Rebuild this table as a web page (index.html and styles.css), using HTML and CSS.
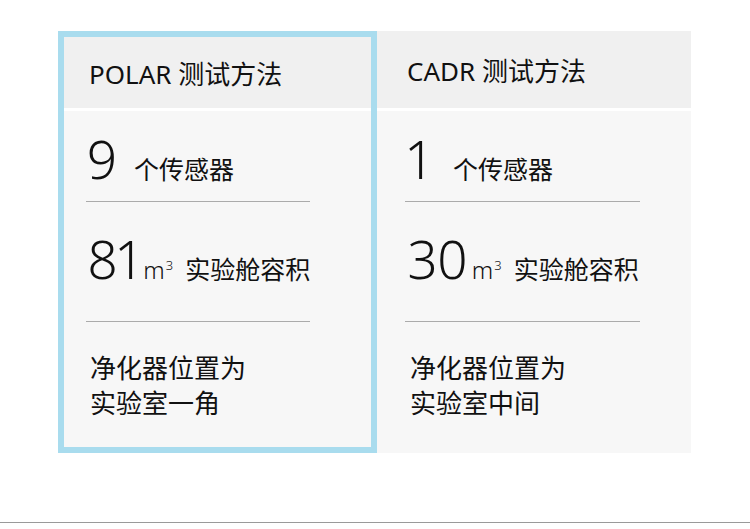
FILE: index.html
```html
<!DOCTYPE html>
<html lang="zh-CN">
<head>
<meta charset="utf-8">
<title>测试方法对比</title>
<link rel="stylesheet" href="styles.css">
</head>
<body>
<div class="compare">
  <section class="card card--active">
    <header class="card-head"><h2 class="title">POLAR 测试方法</h2></header>
    <div class="card-body">
      <div class="stat stat--count"><span class="num num--box">9</span><span class="label">个传感器</span></div>
      <div class="rule"></div>
      <div class="stat stat--vol"><span class="num">81</span><span class="unit">m<sup class="exp">3</sup></span><span class="label">实验舱容积</span></div>
      <div class="rule"></div>
      <p class="note">净化器位置为<br>实验室一角</p>
    </div>
  </section>
  <section class="card">
    <header class="card-head"><h2 class="title">CADR 测试方法</h2></header>
    <div class="card-body">
      <div class="stat stat--count"><span class="num num--box">1</span><span class="label">个传感器</span></div>
      <div class="rule"></div>
      <div class="stat stat--vol"><span class="num">30</span><span class="unit">m<sup class="exp">3</sup></span><span class="label">实验舱容积</span></div>
      <div class="rule"></div>
      <p class="note">净化器位置为<br>实验室中间</p>
    </div>
  </section>
</div>
<div class="footer-line"></div>
</body>
</html>
```
FILE: styles.css
```css
* { box-sizing: border-box; }
html, body { margin: 0; padding: 0; background: #ffffff; }
body {
  font-family: "Noto Sans", "Noto Sans CJK SC", sans-serif;
  color: #111111;
  width: 750px;
  height: 529px;
  overflow: hidden;
}
.compare {
  display: flex;
  padding-top: 31px;
  margin-left: 58px;
}
.card {
  width: 314px;
  height: 422px;
  display: flex;
  flex-direction: column;
}
.card--active {
  width: 319px;
  border: 6px solid #a9dcee;
}
.card-head {
  background: #f0f0f0;
  height: 77px;
  padding: 27px 0 0 30px;
}
.card--active .card-head {
  height: 71px;
  padding: 24px 0 0 25px;
}
.title {
  margin: 0;
  font-weight: 400;
  font-size: 26px;
  line-height: 26px;
  white-space: nowrap;
}
.card-body {
  margin-top: 3px;
  flex: 1;
  background: #f7f7f7;
  padding-left: 28px;
}
.card--active .card-body { padding-left: 22px; }
.rule {
  height: 1px;
  background: #ababab;
  width: 235px;
}
.card--active .rule { width: 224px; }
.stat {
  display: flex;
  align-items: baseline;
  padding-left: 3px;
  white-space: nowrap;
}
.card--active .stat { padding-left: 1px; }
.stat--count { padding-top: 21px; padding-bottom: 16px; }
.stat--vol { padding-top: 30px; padding-bottom: 36px; }
.num {
  font-size: 53px;
  line-height: 53px;
  font-weight: 300;
  font-variant-numeric: proportional-nums;
}
.num--box { width: 47px; }
.card .num--box { width: 45px; }
.card--active .num--box { width: 47px; }
.unit {
  font-size: 24px;
  line-height: 24px;
  font-weight: 300;
  margin-left: 4px;
}
.exp {
  font-size: 13px;
  line-height: 0;
  vertical-align: 9px;
  margin-left: 1px;
}
.label {
  font-family: "Noto Sans CJK SC", sans-serif;
  font-size: 25px;
  line-height: 25px;
}
.stat--vol .label { margin-left: 12px; }
.note {
  margin: 0;
  padding: 29px 0 0 5px;
  font-size: 26px;
  line-height: 35px;
}
.card--active .note { padding-left: 4px; }
.footer-line {
  height: 1px;
  background: #9a9a9a;
  margin-top: 69px;
}
```
